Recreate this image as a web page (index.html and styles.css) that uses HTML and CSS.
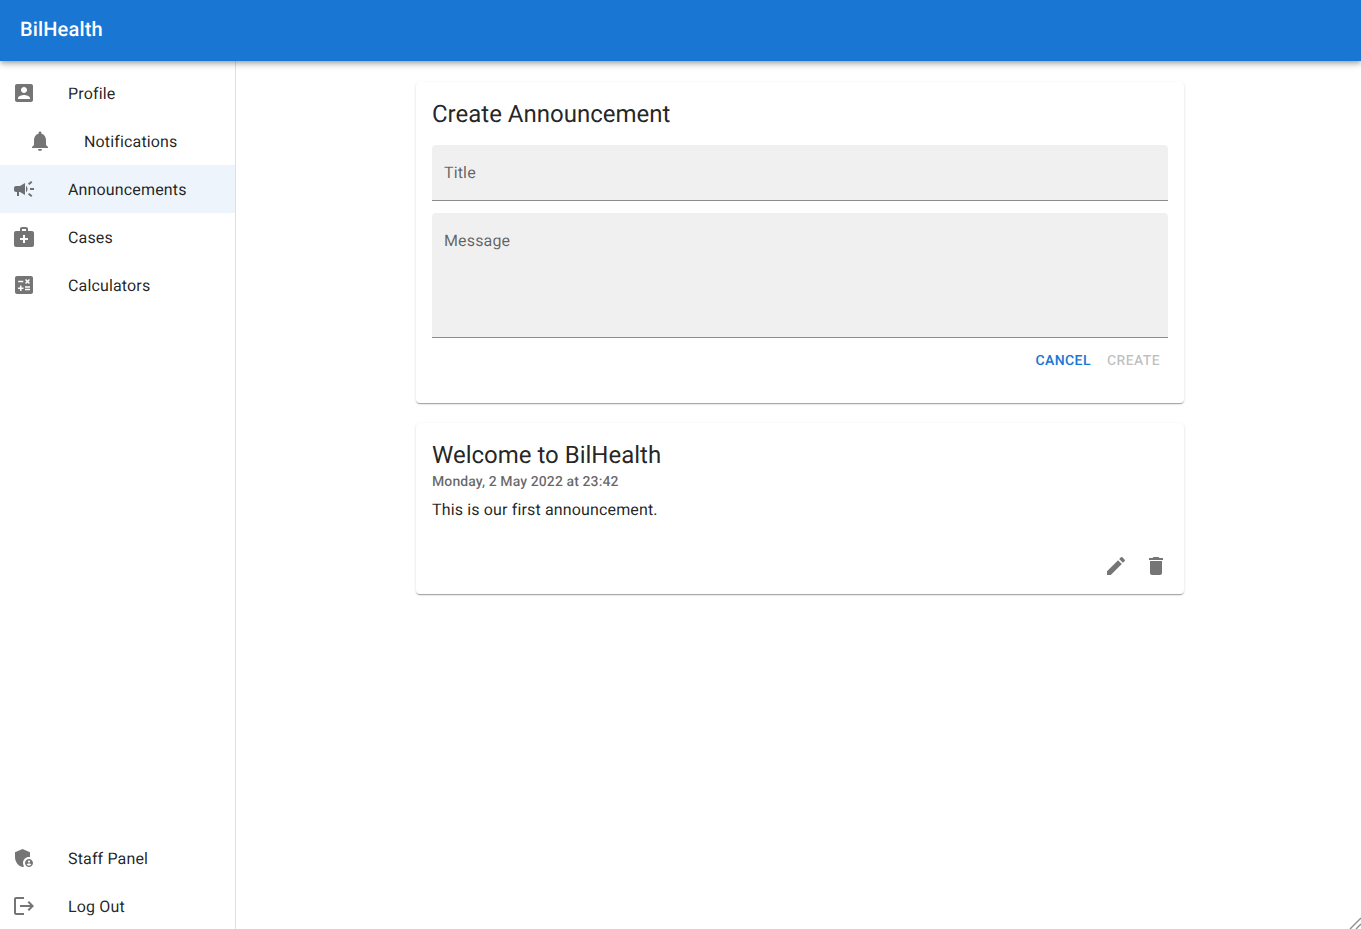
FILE: index.html
```html
<!DOCTYPE html>
<html lang="en">
<head>
  <meta charset="UTF-8" />
  <meta name="viewport" content="width=device-width, initial-scale=1" />
  <title>BilHealth</title>
  <link rel="stylesheet" href="styles.css">
</head>
<body>
  <header class="topbar">
    <div class="brand">BilHealth</div>
  </header>

  <div class="layout">
    <nav class="sidebar">
      <ul class="nav-list">
        <li class="nav-item">
          <svg class="icon" viewBox="0 0 24 24"><path d="M3 5v14c0 1.1.89 2 2 2h14c1.1 0 2-.9 2-2V5c0-1.1-.9-2-2-2H5c-1.11 0-2 .9-2 2zm12 4c0 1.66-1.34 3-3 3s-3-1.34-3-3 1.34-3 3-3 3 1.34 3 3zm-9 8c0-2 4-3.1 6-3.1s6 1.1 6 3.1v1H6v-1z"/></svg>
          <span>Profile</span>
        </li>
        <li class="nav-item nested">
          <svg class="icon" viewBox="0 0 24 24"><path d="M12 22c1.1 0 2-.9 2-2h-4c0 1.1.89 2 2 2zm6-6v-5c0-3.07-1.64-5.64-4.5-6.32V4c0-.83-.67-1.5-1.5-1.5s-1.5.67-1.5 1.5v.68C7.63 5.36 6 7.92 6 11v5l-2 2v1h16v-1l-2-2z"/></svg>
          <span>Notifications</span>
        </li>
        <li class="nav-item active">
          <svg class="icon" viewBox="0 0 24 24"><path d="M18 11v2h4v-2h-4zm-2 6.61c.96.71 2.21 1.65 3.2 2.39.4-.53.8-1.07 1.2-1.6-.99-.74-2.24-1.68-3.2-2.4-.4.54-.8 1.08-1.2 1.61zM20.4 5.6c-.4-.53-.8-1.07-1.2-1.6-.99.74-2.24 1.68-3.2 2.4.4.53.8 1.07 1.2 1.6.96-.72 2.21-1.65 3.2-2.4zM4 9c-1.1 0-2 .9-2 2v2c0 1.1.9 2 2 2h1v4h2v-4h1l5 3V6L8 9H4zm11.5 3c0-1.33-.58-2.53-1.5-3.35v6.69c.92-.81 1.5-2.01 1.5-3.34z"/></svg>
          <span>Announcements</span>
        </li>
        <li class="nav-item">
          <svg class="icon" viewBox="0 0 24 24"><path d="M20 6h-4V4c0-1.1-.9-2-2-2h-4c-1.1 0-2 .9-2 2v2H4c-1.1 0-2 .9-2 2v12c0 1.1.9 2 2 2h16c1.1 0 2-.9 2-2V8c0-1.1-.9-2-2-2zM10 4h4v2h-4V4zm6 11h-3v3h-2v-3H8v-2h3v-3h2v3h3v2z"/></svg>
          <span>Cases</span>
        </li>
        <li class="nav-item">
          <svg class="icon" viewBox="0 0 24 24"><path d="M19 3H5c-1.1 0-2 .9-2 2v14c0 1.1.9 2 2 2h14c1.1 0 2-.9 2-2V5c0-1.1-.9-2-2-2zm-5.97 4.06L14.09 6l1.41 1.41L16.91 6l1.06 1.06-1.41 1.41 1.41 1.41-1.06 1.06-1.41-1.4-1.41 1.41-1.06-1.06 1.41-1.41-1.41-1.42zm-6.78.66h5v1.5h-5v-1.5zM11.5 16h-2v2H8v-2H6v-1.5h2v-2h1.5v2h2V16zm6.5 1.25h-5v-1.5h5v1.5zm0-2.5h-5v-1.5h5v1.5z"/></svg>
          <span>Calculators</span>
        </li>
      </ul>

      <ul class="nav-list bottom">
        <li class="nav-item">
          <svg class="icon" viewBox="0 0 24 24"><path d="M17 11c.34 0 .67.04 1 .09V6.27L10.5 3 3 6.27v4.91c0 4.54 3.2 8.79 7.5 9.82.55-.13 1.08-.32 1.6-.55-.69-.98-1.1-2.17-1.1-3.45 0-3.31 2.69-6 6-6z"/><path d="M17 13c-2.21 0-4 1.79-4 4s1.79 4 4 4 4-1.79 4-4-1.79-4-4-4zm0 1.38c.62 0 1.12.51 1.12 1.12s-.51 1.12-1.12 1.12-1.12-.51-1.12-1.12.5-1.12 1.12-1.12zm0 5.37c-.93 0-1.74-.46-2.24-1.17.05-.72 1.51-1.08 2.24-1.08s2.19.36 2.24 1.08c-.5.71-1.31 1.17-2.24 1.17z"/></svg>
          <span>Staff Panel</span>
        </li>
        <li class="nav-item">
          <svg class="icon" viewBox="0 0 24 24"><path d="m17 7-1.41 1.41L18.17 11H8v2h10.17l-2.58 2.58L17 17l5-5zM4 5h8V3H4c-1.1 0-2 .9-2 2v14c0 1.1.9 2 2 2h8v-2H4V5z"/></svg>
          <span>Log Out</span>
        </li>
      </ul>
    </nav>

    <main class="content">
      <section class="card create-card">
        <h2 class="card-title">Create Announcement</h2>
        <div class="field title-field">Title</div>
        <div class="field message-field">Message</div>
        <div class="form-actions">
          <button class="text-btn primary" type="button">Cancel</button>
          <button class="text-btn disabled" type="button" disabled>Create</button>
        </div>
      </section>

      <section class="card post-card">
        <h2 class="card-title">Welcome to BilHealth</h2>
        <div class="post-date">Monday, 2 May 2022 at 23:42</div>
        <p class="post-body">This is our first announcement.</p>
        <div class="post-actions">
          <button class="icon-btn" type="button" aria-label="Edit">
            <svg class="icon" viewBox="0 0 24 24"><path d="M3 17.25V21h3.75L17.81 9.94l-3.75-3.75L3 17.25zM20.71 7.04c.39-.39.39-1.02 0-1.41l-2.34-2.34a.9959.9959 0 0 0-1.41 0l-1.83 1.83 3.75 3.75 1.83-1.83z"/></svg>
          </button>
          <button class="icon-btn" type="button" aria-label="Delete">
            <svg class="icon" viewBox="0 0 24 24"><path d="M6 19c0 1.1.9 2 2 2h8c1.1 0 2-.9 2-2V7H6v12zM19 4h-3.5l-1-1h-5l-1 1H5v2h14V4z"/></svg>
          </button>
        </div>
      </section>
    </main>
  </div>

  <svg class="resize-grip" viewBox="0 0 12 12"><path d="M12 1 1 12M12 7 7 12"/></svg>
</body>
</html>
```

FILE: styles.css
```css
* {
  box-sizing: border-box;
}

html,
body {
  height: 100%;
}

body {
  margin: 0;
  font-family: Roboto, "Liberation Sans", sans-serif;
  font-size: 16px;
  color: rgba(0, 0, 0, 0.87);
  background: white;
  display: flex;
  flex-direction: column;
  overflow: hidden;
  text-rendering: geometricPrecision;
}

.topbar {
  height: 61px;
  flex: none;
  display: flex;
  align-items: center;
  padding: 0 20px 4px;
  background-color: #1976d2;
  color: white;
  box-shadow: 0 2px 4px -1px rgba(0,0,0,0.2), 0 4px 5px 0 rgba(0,0,0,0.14), 0 1px 10px 0 rgba(0,0,0,0.12);
  position: relative;
  z-index: 2;
}

.brand {
  font-size: 20px;
  font-weight: 500;
  letter-spacing: 0.15px;
}

.layout {
  flex: 1;
  display: flex;
  min-height: 0;
}

.sidebar {
  width: 236px;
  flex: none;
  border-right: 1px solid rgba(0, 0, 0, 0.12);
  display: flex;
  flex-direction: column;
  justify-content: space-between;
}

.nav-list {
  list-style: none;
  margin: 0;
  padding: 8px 0 0;
}

.nav-list.bottom {
  padding: 0;
  margin-bottom: -1px;
}

.nav-item {
  height: 48px;
  display: flex;
  align-items: center;
  gap: 32px;
  padding-left: 12px;
  font-size: 16px;
  letter-spacing: 0.15px;
}

.nav-item.nested {
  padding-left: 28px;
}

.nav-item.active {
  background-color: rgba(25, 118, 210, 0.08);
}

.icon {
  width: 24px;
  height: 24px;
  flex: none;
  fill: rgba(0, 0, 0, 0.54);
  display: block;
}

.content {
  flex: 1;
  padding: 21px 0 0 3px;
  display: flex;
  flex-direction: column;
  align-items: center;
  gap: 20px;
}

.card {
  width: 768px;
  padding: 16px;
  background: white;
  border-radius: 4px;
  box-shadow: 0 2px 1px -1px rgba(0,0,0,0.2), 0 1px 1px 0 rgba(0,0,0,0.14), 0 1px 3px 0 rgba(0,0,0,0.12);
}

.create-card {
  height: 321px;
}

.post-card {
  height: 171px;
}

.card-title {
  margin: 0;
  font-size: 24px;
  font-weight: 400;
  line-height: 32px;
}

.field {
  background-color: rgba(0, 0, 0, 0.06);
  border-bottom: 1px solid rgba(0, 0, 0, 0.42);
  border-radius: 4px 4px 0 0;
  padding: 0 12px;
  font-size: 16px;
  letter-spacing: 0.15px;
  color: rgba(0, 0, 0, 0.6);
}

.title-field {
  height: 56px;
  margin-top: 15px;
  line-height: 55px;
}

.message-field {
  height: 125px;
  margin-top: 12px;
  padding-top: 16px;
  line-height: 23px;
}

.form-actions {
  display: flex;
  justify-content: flex-end;
  margin-top: 8px;
}

.text-btn {
  height: 30px;
  padding: 0 8px;
  border: none;
  background: none;
  font-family: inherit;
  font-size: 14px;
  font-weight: 500;
  letter-spacing: 0.4px;
  text-transform: uppercase;
  text-rendering: geometricPrecision;
}

.text-btn.primary {
  color: #1976d2;
}

.text-btn.disabled {
  color: rgba(0, 0, 0, 0.26);
}

.post-date {
  font-size: 14px;
  font-weight: 500;
  line-height: 22px;
  letter-spacing: 0.1px;
  color: rgba(0, 0, 0, 0.6);
}

.post-body {
  margin: 7px 0 0;
  font-size: 16px;
  line-height: 20px;
  letter-spacing: 0.15px;
}

.post-actions {
  display: flex;
  justify-content: flex-end;
  margin: 26px -8px 0 0;
}

.icon-btn {
  width: 40px;
  height: 40px;
  padding: 8px;
  border: none;
  background: none;
}

.resize-grip {
  position: absolute;
  right: 0;
  bottom: 0;
  width: 12px;
  height: 12px;
  fill: none;
  stroke: #8c8c8c;
  stroke-width: 1.4;
}
```
